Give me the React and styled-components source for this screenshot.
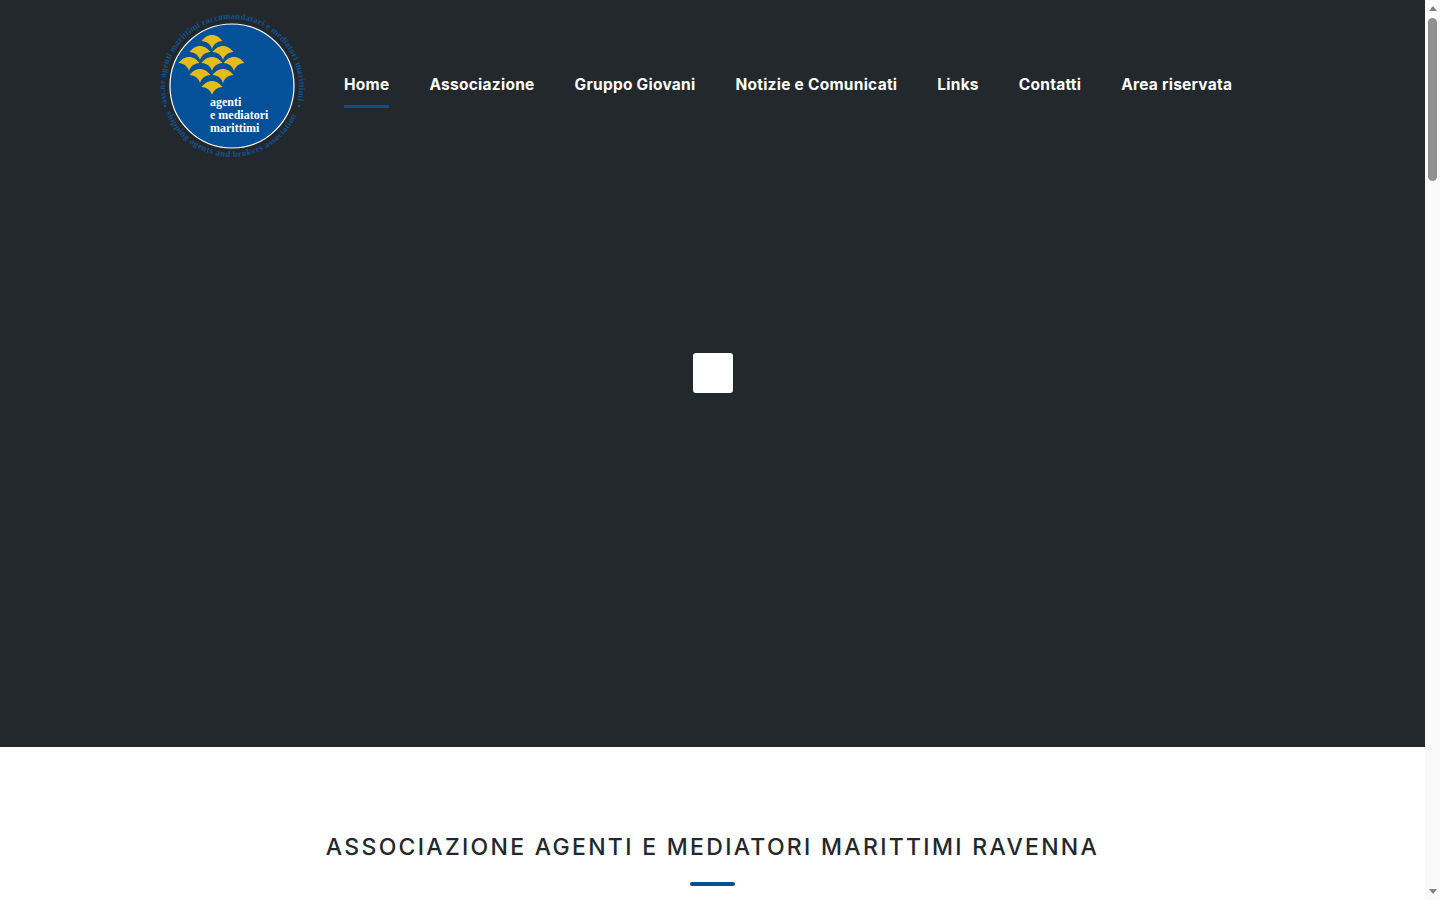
import React from 'react'
import styled, { createGlobalStyle } from 'styled-components'

const GlobalStyle = createGlobalStyle`
    html, body, #root {
        height: 100%;
    }
    body {
        margin: 0;
        overflow: hidden;
        background: #FFF;
        font-family: "Inter", "Liberation Sans", sans-serif;
        color: #23282C;
    }
`

const Shell = styled.div`
    display: flex;
    height: 100vh;
`

const Page = styled.main`
    flex: 1;
    min-width: 0;
    overflow-y: auto;
`

const ScrollRail = styled.div`
    flex: 0 0 15px;
    display: flex;
    flex-direction: column;
    background: #FAFAFA;
`

const ScrollButton = styled.div`
    flex: 0 0 17px;
    display: flex;
    justify-content: center;
    align-items: center;
`

const ScrollArrow = styled.div`
    width: 0;
    height: 0;
    border-left: 4.5px solid transparent;
    border-right: 4.5px solid transparent;
    border-${({ $down }) => ($down ? 'top' : 'bottom')}: 5px solid #808080;
`

const ScrollTrack = styled.div`
    flex: 1;
    padding: 1px 3px 0;
`

const ScrollThumb = styled.div`
    height: 163px;
    background: #909090;
    border-radius: 5px;
`

const Hero = styled.header`
    height: 747px;
    background-color: #23282C;
`

const TopBar = styled.div`
    display: flex;
    align-items: center;
    height: 170px;
    padding-left: 158px;
`

const Menu = styled.nav`
    display: flex;
    gap: 40px;
    margin-left: 36px;
`

const MenuLink = styled.a`
    display: block;
    position: relative;
    padding: 14px 0;
    color: #FFF;
    font-size: 15.5px;
    line-height: 20px;
    font-weight: 700;
    letter-spacing: 0.25px;
    cursor: pointer;

    &::after {
        content: '';
        position: absolute;
        left: 0;
        right: 0;
        bottom: 1px;
        height: 3px;
        background: ${({ $active }) => ($active ? '#07508F' : 'transparent')};
    }
`

const LoaderArea = styled.div`
    display: flex;
    justify-content: center;
    padding-top: 183px;
`

const Loader = styled.div`
    width: 40px;
    height: 40px;
    background: #FFF;
    border-radius: 3px;
`

const Intro = styled.section`
    box-sizing: border-box;
    height: 4033px;
    padding-top: 85px;
    text-align: center;
`

const Heading = styled.h2`
    margin: 0;
    font-size: 23px;
    line-height: 30px;
    font-weight: 500;
    letter-spacing: 2.3px;
`

const Divider = styled.div`
    width: 45px;
    height: 4px;
    margin: 20px auto 0;
    background: #07508F;
    border-radius: 2px;
`

const fans = [
    [54, 25], [42, 36], [65, 36], [31, 47], [54, 47], [76, 47], [42, 59], [65, 59], [54, 71],
]

const Logo = () => (
    <svg width="150" height="150" viewBox="0 0 150 150">
        <defs>
            <path id="ringTop" d="M9.3 93.3A67 67 0 1 1 138.7 93.3" />
            <path id="ringBottom" d="M8.2 102.6A71 71 0 0 0 139.8 102.6" />
        </defs>
        <g fill="#125290" fontFamily="Liberation Serif, serif" fontSize="8.8" fontWeight="700">
            <text>
                <textPath href="#ringTop" textLength="242">ass.ne agenti marittimi raccomandatari e mediatori marittimi</textPath>
            </text>
            <text>
                <textPath href="#ringBottom" textLength="165">shipping agents and brokers association</textPath>
            </text>
            <circle cx="7" cy="96" r="1.3" />
            <circle cx="141" cy="96" r="1.3" />
        </g>
        <circle cx="74" cy="76" r="62" fill="#04519A" stroke="#FFF" strokeWidth="1.2" />
        {fans.map(([x, y]) => (
            <path
                key={`${x}-${y}`}
                transform={`translate(${x} ${y})`}
                d="M-10.5 6C-7 1.5-3 0 0 0 3 0 7 1.5 10.5 6 5 6.5 1.5 9 0 14-1.5 9-5 6.5-10.5 6Z"
                fill="#E4BC1E"
            />
        ))}
        <g fill="#FFF" fontFamily="Liberation Serif, serif" fontSize="12" fontWeight="700">
            <text x="52" y="96">agenti</text>
            <text x="52" y="109">e mediatori</text>
            <text x="52" y="122">marittimi</text>
        </g>
    </svg>
)

const links = ['Home', 'Associazione', 'Gruppo Giovani', 'Notizie e Comunicati', 'Links', 'Contatti', 'Area riservata']

const App = () => {
    return (
        <>
            <GlobalStyle />
            <Shell>
                <Page>
                    <Hero>
                        <TopBar>
                            <Logo />
                            <Menu>
                                {links.map((link, i) => (
                                    <MenuLink key={link} $active={i === 0}>{link}</MenuLink>
                                ))}
                            </Menu>
                        </TopBar>
                        <LoaderArea>
                            <Loader />
                        </LoaderArea>
                    </Hero>
                    <Intro>
                        <Heading>ASSOCIAZIONE AGENTI E MEDIATORI MARITTIMI RAVENNA</Heading>
                        <Divider />
                    </Intro>
                </Page>
                <ScrollRail>
                    <ScrollButton><ScrollArrow /></ScrollButton>
                    <ScrollTrack><ScrollThumb /></ScrollTrack>
                    <ScrollButton><ScrollArrow $down /></ScrollButton>
                </ScrollRail>
            </Shell>
        </>
    )
}

export default App
